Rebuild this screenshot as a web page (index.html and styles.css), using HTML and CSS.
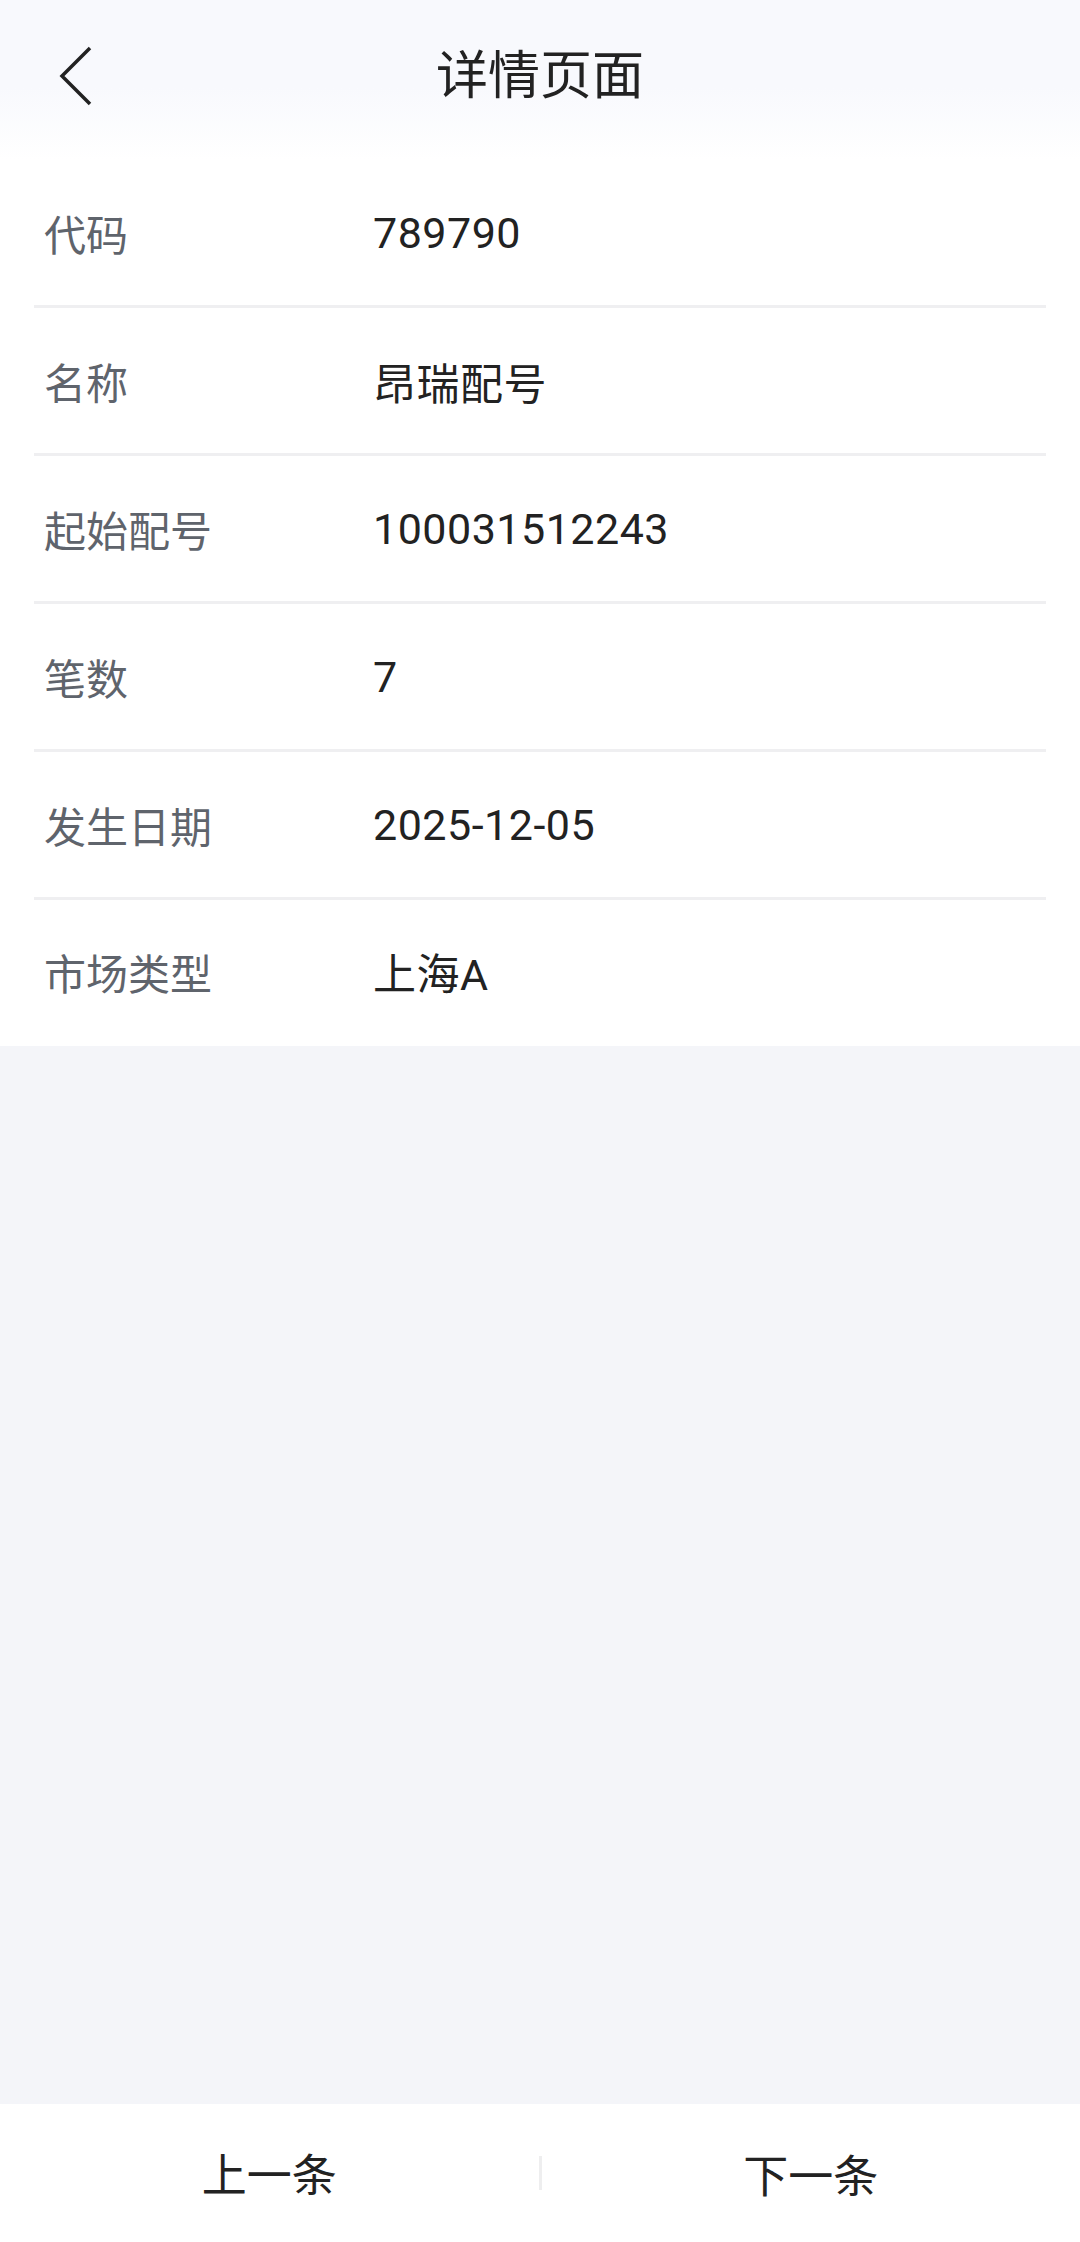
FILE: index.html
```html
<!DOCTYPE html>
<html lang="zh-CN">

<head>
  <meta charset="UTF-8">
  <meta name="viewport" content="width=device-width, initial-scale=1.0">
  <title>详情页面</title>
  <link rel="stylesheet" href="styles.css">
</head>

<body>
  <div class="page">
    <div class="header">
      <span class="back">
        <svg width="40" height="64" viewBox="0 0 40 64">
          <path d="M32 4 L4 32 L32 60" fill="none" stroke="#222" stroke-width="3.5" stroke-linejoin="miter" />
        </svg>
      </span>
      <h1>详情页面</h1>
    </div>

    <ul class="info">
      <li><span class="label">代码</span><span class="value">789790</span></li>
      <li><span class="label">名称</span><span class="value">昂瑞配号</span></li>
      <li><span class="label">起始配号</span><span class="value">100031512243</span></li>
      <li><span class="label">笔数</span><span class="value">7</span></li>
      <li><span class="label">发生日期</span><span class="value">2025-12-05</span></li>
      <li><span class="label">市场类型</span><span class="value">上海A</span></li>
    </ul>

    <div class="blank"></div>

    <div class="footer">
      <span class="btn">上一条</span>
      <span class="btn">下一条</span>
    </div>
  </div>
</body>

</html>
```

FILE: styles.css
```css
* {
  margin: 0;
  padding: 0;
  box-sizing: border-box;
}

body {
  font-family: "Noto Sans CJK SC", "Noto Sans", sans-serif;
  background-color: #f4f5f9;
  color: #222;
}

.page {
  display: flex;
  flex-direction: column;
  height: 100vh;
}

.header {
  height: 160px;
  display: flex;
  align-items: center;
  justify-content: center;
  padding-bottom: 18px;
  background: linear-gradient(#f8f9fd, #f8f9fd 55%, #fff);
  position: relative;
}

.header h1 {
  font-size: 52px;
  font-weight: 400;
  color: #222;
}

.back {
  position: absolute;
  left: 58px;
  top: 44px;
  display: flex;
}

.info {
  list-style: none;
  background-color: #fff;
  padding: 0 34px;
}

.info li {
  height: 148px;
  display: flex;
  align-items: center;
  padding-left: 10px;
  border-bottom: 3px solid #efeff1;
  font-size: 42px;
}

.info li:last-child {
  height: 146px;
  border-bottom: none;
  padding-bottom: 4px;
}

.label {
  width: 329px;
  color: #5f646c;
}

.value {
  font-family: Roboto, "Noto Sans CJK SC", sans-serif;
  font-size: 43px;
  letter-spacing: 0.5px;
  color: #222;
}

.blank {
  flex: 1;
}

.footer {
  height: 138px;
  background-color: #fff;
  display: flex;
  align-items: center;
}

.btn {
  flex: 1;
  text-align: center;
  font-size: 45px;
  color: #222;
}

.btn:first-child {
  border-right: 3px solid #eeeeef;
  line-height: 34px;
}
```
